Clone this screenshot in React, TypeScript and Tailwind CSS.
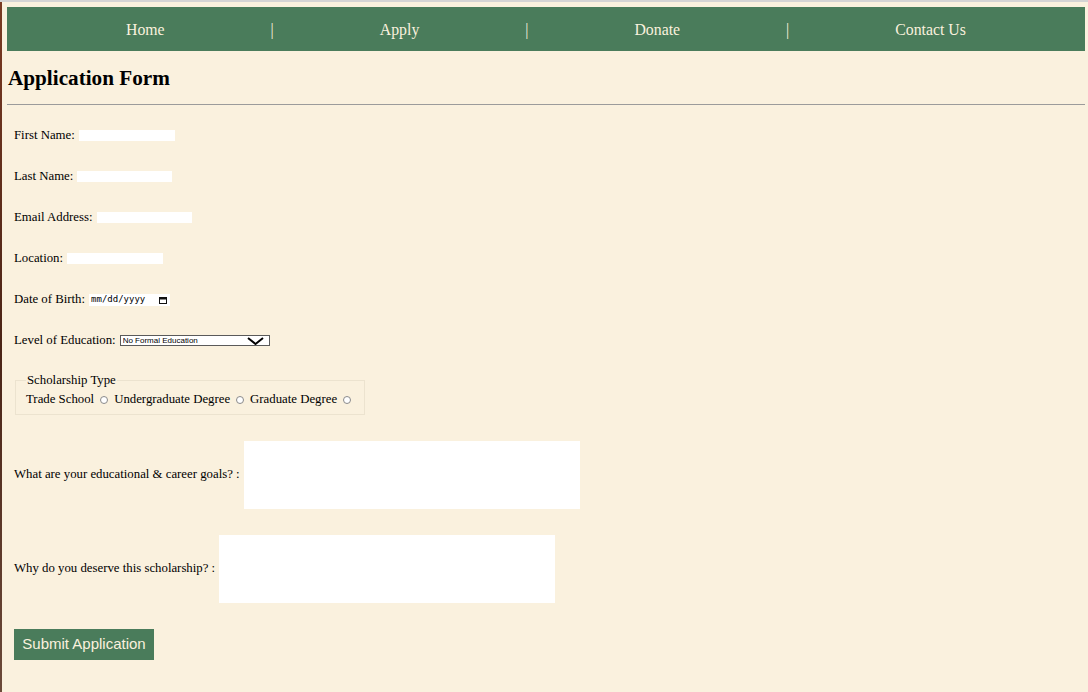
import React from "react";

const serif = { fontFamily: '"Liberation Serif", "Times New Roman", serif' };

function TextRow({ label, inputW = 96 }: { label: string; inputW?: number }) {
  return (
    <div className="flex items-center h-[41px] text-[12.8px] text-black">
      <span>{label}</span>
      <input
        type="text"
        className="ml-[4px] h-[11px] bg-white border-0 outline-none p-0"
        style={{ width: inputW }}
      />
    </div>
  );
}

function Radio({ last }: { last?: boolean }) {
  return (
    <input
      type="radio"
      name="scholarship"
      className={
        "appearance-none w-[8px] h-[8px] rounded-full border border-[#8a8a8a] bg-white ml-[6px] " +
        (last ? "mr-[3px]" : "mr-[6px]")
      }
    />
  );
}

export default function App() {
  const navItems = ["Home", "|", "Apply", "|", "Donate", "|", "Contact Us"];
  return (
    <div
      className="min-h-[692px] w-full flex bg-[#faf1de] border-t-2 border-[#d4d4d4]"
      style={serif}
    >
      <div className="w-[2px] shrink-0 bg-gradient-to-b from-[#7a3a22] via-[#4a2416] to-[#6b4a3a]" />
      <div className="flex-1 pl-[5px] pr-[3px] pt-[5px] flex flex-col">
        <nav className="h-[44px] bg-[#4a7c5b] flex items-center pl-[119px] gap-[106px] text-[15.8px] text-[#faf1de] pt-[1px]">
          {navItems.map((n, i) => (
            <span key={i}>{n}</span>
          ))}
        </nav>
        <h2 className="pt-[17px] text-[21.2px] leading-[21px] font-bold text-black pl-[1px]">
          Application Form
        </h2>
        <div className="mt-[15px] h-px bg-[#9b9b9b]" />
        <form className="pl-[7px] pt-[10px] flex flex-col items-start">
          <TextRow label="First Name:" />
          <TextRow label="Last Name:" inputW={95} />
          <TextRow label="Email Address:" inputW={95} />
          <TextRow label="Location:" />
          <div className="flex items-center h-[41px] text-[12.8px] text-black">
            <span>Date of Birth:</span>
            <div className="ml-[4px] w-[81px] h-[12px] bg-white flex items-center pl-[2px] pr-[3px] justify-between">
              <span
                className="text-[9px] leading-[9px] text-black"
                style={{ fontFamily: '"DejaVu Sans Mono", "Liberation Mono", monospace' }}
              >
                mm/dd/yyyy
              </span>
              <svg width="8" height="8" viewBox="0 0 8 8">
                <rect x="0.5" y="1.5" width="7" height="6" fill="none" stroke="#111" strokeWidth="1" />
                <rect x="0.5" y="1.5" width="7" height="2" fill="#111" />
              </svg>
            </div>
          </div>
          <div className="flex items-center h-[41px] text-[12.8px] text-black">
            <span>Level of Education:</span>
            <div className="relative ml-[4px] w-[150px] h-[11px]">
              <select
                className="block appearance-none w-full h-[11px] border border-[#5a5a5a] bg-white text-[8px] leading-[9px] pl-[2px] py-0 text-black outline-none"
                style={{ fontFamily: '"Liberation Sans", Arial, sans-serif' }}
                defaultValue="none"
              >
                <option value="none">No Formal Education</option>
                <option value="hs">High School</option>
                <option value="college">College</option>
              </select>
              <svg
                className="absolute right-[6px] top-[2px] pointer-events-none"
                width="17"
                height="8"
                viewBox="0 0 17 8"
              >
                <path d="M1 1 L8.5 7 L16 1" fill="none" stroke="#000" strokeWidth="2" />
              </svg>
            </div>
          </div>
          <fieldset className="ml-[1px] mt-[12px] border border-[#ece3cf] px-[10px] pb-[7px] text-[12.8px] text-black">
            <legend className="px-[1px] leading-[15px]">Scholarship Type</legend>
            <div className="flex items-center h-[15px] mt-[4px] leading-[15px]">
              <span>Trade School</span>
              <Radio />
              <span>Undergraduate Degree</span>
              <Radio />
              <span>Graduate Degree</span>
              <Radio last />
            </div>
          </fieldset>
          <div className="mt-[26px] flex items-center text-[12.8px] text-black">
            <span>What are your educational &amp; career goals? :</span>
            <textarea className="ml-[4px] w-[336px] h-[68px] bg-white border-0 outline-none resize-none" />
          </div>
          <div className="mt-[26px] flex items-center text-[12.8px] text-black">
            <span>Why do you deserve this scholarship? :</span>
            <textarea className="ml-[4px] w-[336px] h-[68px] bg-white border-0 outline-none resize-none" />
          </div>
          <button
            type="button"
            className="mt-[26px] w-[140px] h-[31px] bg-[#4a7c5b] text-[#faf1de] text-[15px] flex items-center justify-center"
            style={{ fontFamily: '"Liberation Sans", Arial, sans-serif' }}
          >
            Submit Application
          </button>
        </form>
      </div>
    </div>
  );
}
